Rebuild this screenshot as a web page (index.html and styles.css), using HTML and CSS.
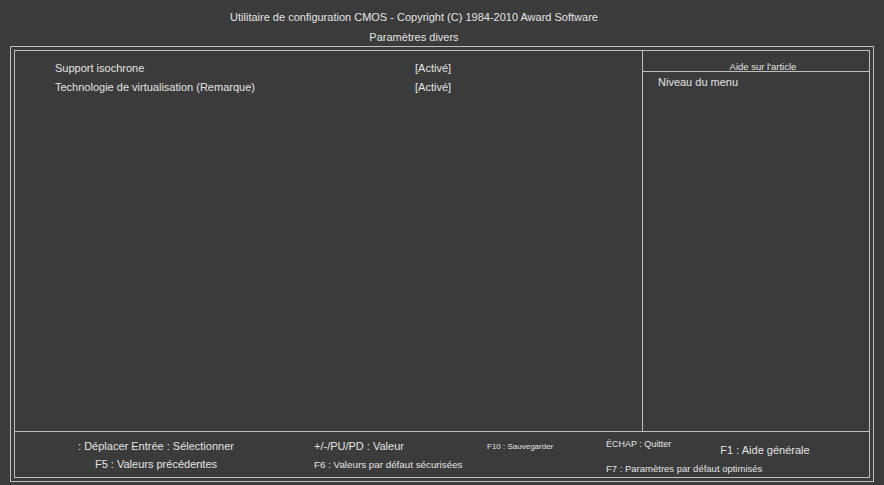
FILE: index.html
```html
<!DOCTYPE html>
<html lang="fr">
<head>
    <meta charset="UTF-8">
    <meta name="viewport" content="width=device-width, initial-scale=1.0">
    <title>Paramètres divers</title>
    <link rel="stylesheet" href="styles.css">
</head>
<body>
    <div class="header">
        <div class="title">Utilitaire de configuration CMOS - Copyright (C) 1984-2010 Award Software</div>
        <div class="subtitle">Paramètres divers</div>
    </div>

    <div class="frame">
        <div class="inner">
            <div class="main">
                <div class="items">
                    <div class="item">
                        <span class="label">Support isochrone</span>
                        <span class="value">[Activé]</span>
                    </div>
                    <div class="item">
                        <span class="label">Technologie de virtualisation (Remarque)</span>
                        <span class="value">[Activé]</span>
                    </div>
                </div>
                <div class="help">
                    <div class="help-title">Aide sur l'article</div>
                    <div class="help-text">Niveau du menu</div>
                </div>
            </div>

            <div class="footer">
                <div class="col col-a">
                    <span>: Déplacer Entrée : Sélectionner</span>
                    <span>F5 : Valeurs précédentes</span>
                </div>
                <div class="col col-b">
                    <span>+/-/PU/PD : Valeur</span>
                    <span class="f6">F6 : Valeurs par défaut sécurisées</span>
                </div>
                <div class="col col-c">
                    <span class="tiny">F10 : Sauvegarder</span>
                </div>
                <div class="col col-d">
                    <div class="top-row">
                        <span class="small">ÉCHAP : Quitter</span>
                        <span class="f1">F1 : Aide générale</span>
                    </div>
                    <span class="f7">F7 : Paramètres par défaut optimisés</span>
                </div>
            </div>
        </div>
    </div>
</body>
</html>
```

FILE: styles.css
```css
* {
    margin: 0;
    padding: 0;
    box-sizing: border-box;
}

body {
    background-color: #3b3b3b;
    font-family: "Liberation Sans", Arial, sans-serif;
    color: #e4e4e4;
    width: 884px;
    height: 485px;
    overflow: hidden;
}

.header {
    height: 46px;
    text-align: center;
    font-size: 11px;
    padding-top: 11px;
    padding-right: 56px;
}

.subtitle {
    margin-top: 8px;
}

.frame {
    margin: 0 10px;
    height: 436px;
    border: 1px solid #bdbdbd;
    padding: 3px;
}

.inner {
    height: 100%;
    border: 1px solid #bdbdbd;
    display: flex;
    flex-direction: column;
}

.main {
    flex: 1;
    display: flex;
}

.items {
    flex: 1;
    border-right: 1px solid #bdbdbd;
    padding: 11px 0 0 40px;
    font-size: 11px;
}

.item {
    display: flex;
    height: 19px;
}

.item .label {
    width: 360px;
}

.help {
    width: 226px;
}

.help-title {
    font-size: 9.5px;
    text-align: center;
    padding: 10px 0 0 14px;
    height: 21px;
    border-bottom: 1px solid #bdbdbd;
}

.help-text {
    font-size: 11px;
    padding: 4px 0 0 15px;
}

.footer {
    height: 46px;
    border-top: 1px solid #bdbdbd;
    display: flex;
    font-size: 11px;
}

.col {
    display: flex;
    flex-direction: column;
}

.col-a {
    width: 282px;
    align-items: center;
    padding-top: 8px;
    gap: 6px;
}

.col-b {
    width: 190px;
    padding: 8px 0 0 17px;
    gap: 7px;
}

.col-c {
    width: 119px;
    padding-top: 10px;
}

.col-d {
    padding-top: 7px;
}

.top-row {
    display: flex;
    align-items: flex-end;
    gap: 49px;
}

.small {
    font-size: 9px;
}

.tiny {
    font-size: 8px;
}

.f6 {
    font-size: 9.8px;
}

.f1 {
    font-size: 11px;
    margin-bottom: -7px;
}

.f7 {
    font-size: 9.5px;
    margin-top: 14px;
}
```
